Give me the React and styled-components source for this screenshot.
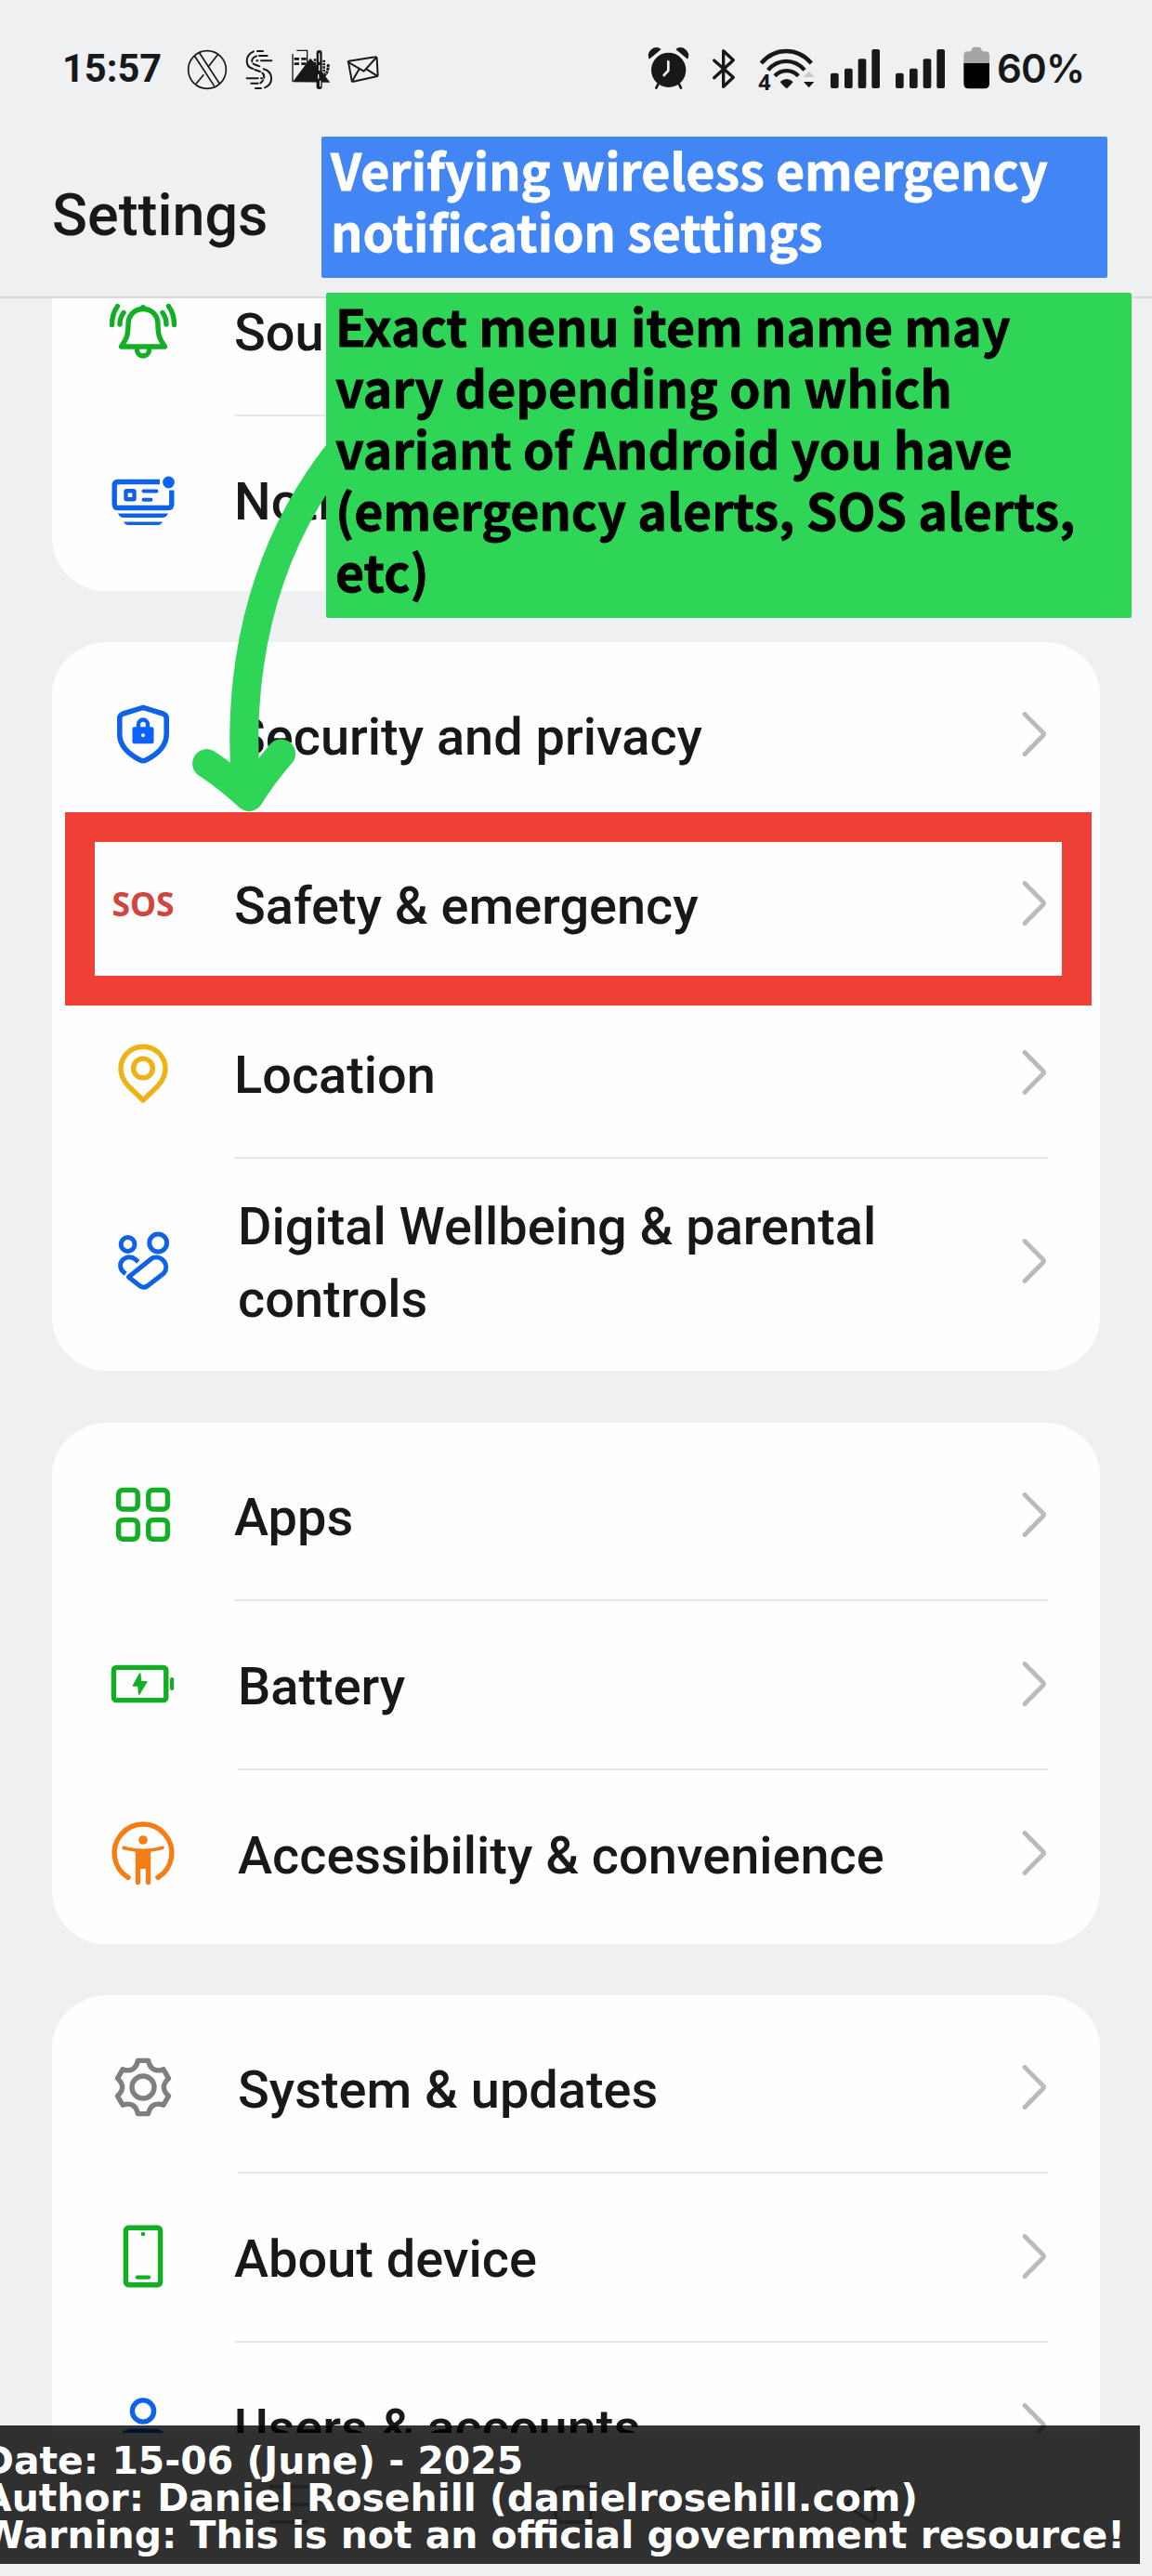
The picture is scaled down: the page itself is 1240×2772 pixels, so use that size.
import React from "react";
import styled, { createGlobalStyle } from "styled-components";

const GlobalStyle = createGlobalStyle`
  body { margin: 0; background: #eff1f3; }
  * { box-sizing: border-box; }
`;

const colors = {
  page: "#eff0f2",
  ink: "#17181a",
  green: "#12af24",
  blue: "#0d62e6",
  amber: "#edb216",
  orange: "#f47e14",
  grey: "#7f7f7f",
  red: "#d2453c",
};

const Screen = styled.div`
  position: relative;
  width: 1240px;
  height: 2772px;
  overflow: hidden;
  display: flex;
  flex-direction: column;
  background: ${colors.page};
  color: ${colors.ink};
  font-family: Roboto, "Liberation Sans", sans-serif;
`;

/* ---------- status bar ---------- */

const StatusBar = styled.div`
  height: 148px;
  flex: none;
  display: flex;
  justify-content: space-between;
  align-items: center;
  padding: 0 73px 0 67px;
`;

const StatusGroup = styled.div`
  display: flex;
  align-items: center;
`;

const Clock = styled.div`
  width: 106px;
  font-size: 41.6px;
  line-height: 52px;
  font-weight: 700;
  white-space: nowrap;
`;

const Percent = styled.div`
  width: 94px;
  margin-left: 8px;
  font-family: Inter, Roboto, sans-serif;
  font-size: 42px;
  line-height: 52px;
  font-weight: 600;
  letter-spacing: -0.8px;
  white-space: nowrap;
`;

const StatusSvg = styled.svg`
  display: block;
  flex: none;
  width: ${(p) => p.$w / 3}px;
  height: 52px;
  margin-left: ${(p) => p.$gap || 0}px;
  overflow: visible;
`;

const StatusIcon = ({ w, gap, children }) => (
  <StatusSvg $w={w} $gap={gap} viewBox={`0 0 ${w} 156`} fill="none" stroke={colors.ink}>
    {children}
  </StatusSvg>
);

const CrossCircleIcon = () => (
  <StatusIcon w={126} gap={29}>
    <circle cx="63" cy="81" r="61" strokeWidth="5" />
    <path d="M22 36 L86 134 M38 27 L103 126" strokeWidth="5" />
    <path d="M99 30 L67 71 M52 97 L27 127" strokeWidth="5" />
  </StatusIcon>
);

const DashedSwirlIcon = () => (
  <StatusIcon w={84} gap={21}>
    <g strokeWidth="6" strokeLinecap="round">
      <path d="M24 22 C-6 35 -4 72 22 78" />
      <path d="M33 37 C13 45 15 62 32 66 L43 70" strokeDasharray="24 8" />
      <path d="M36 21 H54 M42 36 H68 M34 52 H37 M48 52 H82" />
      <path d="M28 81 L45 87 C62 94 62 112 46 124" strokeDasharray="18 8" />
      <path d="M56 79 C90 88 88 128 60 139" />
      <path d="M2 109 H38 M48 109 H51 M16 125 H38 M30 141 H48" />
    </g>
  </StatusIcon>
);

const SceneIcon = () => (
  <StatusIcon w={125} gap={21}>
    <path d="M3 30 V120 M16 19 H50 V60" strokeWidth="4" />
    <path d="M8 46 H24 M31 46 H47 M8 62 H24 M31 62 H47" strokeWidth="8" />
    <path d="M3 121 L60 44 L84 70 L124 122 Z" fill={colors.ink} stroke="none" />
    <path d="M70 60 C72 96 80 102 90 104 C108 104 118 92 118 62" strokeWidth="9" strokeDasharray="9 2" />
    <path d="M104 50 V92 M75 46 V88" strokeWidth="8" strokeDasharray="7 3" />
    <rect x="82" y="20" width="14" height="122" rx="6" fill={colors.ink} strokeWidth="4" />
    <path d="M89 28 V56 M89 66 V84 M86 96 V110 M92 116 V136" stroke={colors.page} strokeWidth="4" />
  </StatusIcon>
);

const EnvelopeIcon = () => (
  <StatusIcon w={104} gap={17}>
    <g strokeWidth="6" strokeLinejoin="round" strokeLinecap="round">
      <path d="M6 56 Q3 55 8 53 L92 40 Q97 39 98 44 L101 99 Q101 102 97 103 L22 119 Q18 120 17 116 Z" />
      <path d="M6 57 L56 86 L96 42 M19 117 L41 79 M99 101 L64 79" />
    </g>
  </StatusIcon>
);

const AlarmIcon = () => (
  <StatusIcon w={129}>
    <g fill={colors.ink} stroke="none">
      <circle cx="65" cy="82" r="56" />
      <path d="M3 44 C-4 22 18 4 38 15 Z" strokeWidth="4" strokeLinejoin="round" stroke={colors.ink} />
      <path d="M126 44 C133 22 111 4 91 15 Z" strokeWidth="4" strokeLinejoin="round" stroke={colors.ink} />
    </g>
    <path d="M32 126 L25 140 M98 126 L105 140" strokeWidth="8" strokeLinecap="round" />
    <path d="M64 55 V84 L50 99" stroke={colors.page} strokeWidth="8" strokeLinecap="round" />
  </StatusIcon>
);

const BluetoothIcon = () => (
  <StatusIcon w={73} gap={26}>
    <path
      d="M5 51 L67 106 L35 136 V20 L67 50 L5 107"
      strokeWidth="10"
      strokeLinecap="round"
      strokeLinejoin="round"
    />
  </StatusIcon>
);

const WifiIcon = () => (
  <StatusIcon w={181} gap={26}>
    <g strokeWidth="13">
      <path d="M7 60 C52 8 124 8 169 60" />
      <path d="M29 82 C62 44 114 44 147 82" />
      <path d="M51 101 C72 79 106 79 127 101" />
    </g>
    <path d="M68 120 Q89 102 110 120 Q98 136 89 142 Q80 136 68 120 Z" fill={colors.ink} stroke="none" />
    <path d="M142 105 L161 87 L180 105 Z" fill="#c9cacb" stroke="none" />
    <path d="M144 120 H178 L161 139 Z" fill={colors.ink} stroke="none" />
    <text
      x="-2"
      y="147"
      fontFamily="Open Sans, sans-serif"
      fontWeight="700"
      fontSize="70"
      fill={colors.ink}
      stroke="none"
    >
      4
    </text>
  </StatusIcon>
);

const SignalIcon = ({ gap }) => (
  <StatusIcon w={159} gap={gap}>
    <g fill={colors.ink} stroke="none">
      <rect x="0" y="92" width="26" height="49" rx="6" />
      <rect x="45" y="77" width="26" height="64" rx="6" />
      <rect x="89" y="46" width="26" height="95" rx="6" />
      <rect x="133" y="15" width="26" height="126" rx="6" />
    </g>
  </StatusIcon>
);

const BatteryLevelIcon = () => (
  <StatusIcon w={85} gap={20}>
    <path d="M1 60 V34 Q1 22 14 22 H24 Q28 8 34 8 H51 Q57 8 61 22 H71 Q84 22 84 34 V60 Z" fill="#a5a5a6" stroke="none" />
    <path d="M1 60 H84 V126 Q84 142 68 142 H17 Q1 142 1 126 Z" fill="#000" stroke="none" />
  </StatusIcon>
);

/* ---------- header ---------- */

const Header = styled.header`
  height: 173px;
  flex: none;
  padding: 48px 0 0 56px;
  border-bottom: 2px solid #d9dadb;
`;

const Title = styled.h1`
  margin: 0;
  font-size: 62.8px;
  line-height: 72px;
  font-weight: 500;
`;

/* ---------- settings list ---------- */

const List = styled.main`
  height: 2297px;
  flex: none;
  overflow: hidden;
  padding: 0 56px;
`;

const Stack = styled.div`
  margin-top: -65px;
  display: flex;
  flex-direction: column;
`;

const Card = styled.section`
  flex: none;
  padding: 8px 56px ${(p) => p.$bottom}px 62px;
  margin-bottom: ${(p) => p.$gap}px;
  border-radius: 58px;
  background: #fefefe;
`;

const Row = styled.div`
  display: flex;
  align-items: stretch;
  height: ${(p) => (p.$tall ? 223 : 182)}px;
`;

const IconSlot = styled.div`
  flex: none;
  display: flex;
  align-items: center;
  width: 72px;
`;

const RowBody = styled.div`
  flex: 1;
  display: flex;
  align-items: center;
  justify-content: space-between;
  margin-left: ${(p) => (p.$indent ? 66 : 62)}px;
  margin-bottom: -2px;
  border-bottom: ${(p) => (p.$divider ? "2px solid #e6e7e8" : "2px solid transparent")};
`;

const Label = styled.div`
  padding-top: 5px;
  max-width: 740px;
  font-size: 55.9px;
  line-height: 78px;
  font-weight: 500;
`;

const RowSvg = styled.svg`
  display: block;
  width: 72px;
  height: 72px;
  overflow: visible;
`;

const SosMark = styled.span`
  width: 72px;
  text-align: center;
  font-family: "Noto Sans", sans-serif;
  font-size: 35.5px;
  line-height: 40px;
  font-weight: 700;
  color: ${colors.red};
`;

const ChevronSvg = styled.svg`
  display: block;
  flex: none;
  width: 28px;
  height: 52px;
`;

const Chevron = () => (
  <ChevronSvg viewBox="0 0 28 52" fill="none" stroke="#bababa" strokeWidth="4.8" strokeLinecap="round" strokeLinejoin="round">
    <path d="M3 4.5 L22.6 24.3 Q24.3 26 22.6 27.7 L3 47.5" />
  </ChevronSvg>
);

const RowIcon = ({ color, width = 5.4, children }) => (
  <RowSvg viewBox="-36 -36 72 72" fill="none" stroke={color} strokeWidth={width} strokeLinejoin="round">
    {children}
  </RowSvg>
);

const BellIcon = () => (
  <RowIcon color={colors.green}>
    <path d="M-16 -6 C-16 -16 -9 -22.5 0 -22.5 S16 -16 16 -6 C16 8 19 11 23.5 18 H-23.5 C-19 11 -16 8 -16 -6 Z" />
    <path d="M-6.5 19 V21.5 A6.5 6.5 0 0 0 6.5 21.5 V19" />
    <path d="M0 -23.5 V-24" strokeLinecap="round" strokeWidth="5.8" />
    <path
      d="M-33.5 -5.5 C-33.5 -13 -31.5 -20 -27.5 -25.5 M-25 -6 C-25 -11 -23.5 -15 -21 -18.5 M33.5 -5.5 C33.5 -13 31.5 -20 27.5 -25.5 M25 -6 C25 -11 23.5 -15 21 -18.5"
      strokeLinecap="round"
    />
  </RowIcon>
);

const NotificationIcon = () => (
  <RowIcon color={colors.blue}>
    <path d="M18 -18.5 H-27 Q-30.8 -18.5 -30.8 -14.5 V5.5 Q-30.8 9.5 -27 9.5 H27 Q30.8 9.5 30.8 5.5 V-9.5" />
    <circle cx="27.5" cy="-18" r="6.4" fill="#0a66fb" stroke="none" />
    <rect x="-18.5" y="-8.8" width="9" height="9" rx="1" strokeWidth="4.4" />
    <path d="M0.5 -8.5 H14.5 M0.5 0.8 H8.5" strokeLinecap="round" strokeWidth="4" />
    <path d="M-27 15.5 H27 Q25 20 21 20 H-21 Q-25 20 -27 15.5 Z M-21 24.5 H21 Q19 28 16 28 H-16 Q-19 28 -21 24.5 Z" fill={colors.blue} stroke="none" />
  </RowIcon>
);

const ShieldIcon = () => (
  <RowIcon color={colors.blue} width={5.6}>
    <path d="M0 -28.6 L21.5 -22 Q25.2 -20.6 25.2 -17 V0 C25.2 14 13 23 2.5 28.2 Q0 29.2 -2.5 28.2 C-13 23 -25.2 14 -25.2 0 V-17 Q-25.2 -20.6 -21.5 -22 Z" />
    <rect x="-11.5" y="-7.8" width="23" height="18" rx="2" fill="#0a62fa" stroke="none" />
    <path d="M-5 -6 V-10.5 A5 5 0 0 1 5 -10.5 V-6" strokeWidth="4.4" stroke="#0a62fa" />
    <circle cx="0" cy="1.3" r="2" fill="#fff" stroke="none" />
  </RowIcon>
);

const PinIcon = () => (
  <RowIcon color={colors.amber}>
    <path d="M0 30 L-16 14.5 C-21 9 -24 3.5 -24 -4 A24 23.8 0 0 1 24 -4 C24 3.5 21 9 16 14.5 Z" />
    <circle cx="0" cy="-4.5" r="10.4" />
  </RowIcon>
);

const WellbeingIcon = () => (
  <RowIcon color={colors.blue} width={5}>
    <circle cx="-16.4" cy="-18" r="7.4" />
    <circle cx="16.2" cy="-19.5" r="9.4" />
    <path d="M-15.6 17.2 L9.5 -3 A10.6 10.6 0 0 1 22.5 13 L4.5 27 Q0.6 29.4 -3.3 26.8 Z" />
    <path d="M-5.2 0.8 L-8 -1.6 C-15 -7.5 -24.4 -2.5 -24.4 5 C-24.4 8.5 -22 11.5 -18.8 13.7" />
  </RowIcon>
);

const AppsIcon = () => (
  <RowIcon color={colors.green}>
    {[-26.4, 5.8].map((x) =>
      [-26.6, 5.6].map((y) => <rect key={`${x},${y}`} x={x} y={y} width="20.6" height="20.6" rx="4.6" />)
    )}
  </RowIcon>
);

const BatteryIcon = () => (
  <RowIcon color={colors.green}>
    <rect x="-31.6" y="-17.6" width="56.4" height="35.2" rx="3" />
    <rect x="29" y="-7" width="4.2" height="14" rx="2" fill={colors.green} stroke="none" />
    <path d="M-3.3 -11 L-10.5 2 H-5 L-4.3 11 L3.7 -2.2 H-2.6 Z" fill={colors.green} strokeWidth="1.6" />
  </RowIcon>
);

const AccessibilityIcon = () => (
  <RowIcon color={colors.orange}>
    <path d="M-16 26.4 A30.9 30.9 0 1 1 16 26.4" strokeLinecap="round" />
    <circle cx="0" cy="-14" r="4.8" fill={colors.orange} stroke="none" />
    <path
      d="M-20.5 -7.4 C-7 -3.6 7 -3.6 20.5 -7.4 Q23 -7.6 22.8 -5.4 Q22.6 -3.8 20.5 -3.4 L8.2 -1.2 V32 Q8 34.2 5.6 34.2 Q3.2 34.2 2.9 32 V17 H-2.9 V32 Q-3.2 34.2 -5.6 34.2 Q-8 34.2 -8.2 32 V-1.2 L-20.5 -3.4 Q-22.6 -3.8 -22.8 -5.4 Q-23 -7.6 -20.5 -7.4 Z"
      fill={colors.orange}
      stroke="none"
    />
  </RowIcon>
);

const rotate = ([x, y], deg) => {
  const a = (deg * Math.PI) / 180;
  const rx = x * Math.cos(a) - y * Math.sin(a);
  const ry = x * Math.sin(a) + y * Math.cos(a);
  return `${rx.toFixed(2)} ${ry.toFixed(2)}`;
};

const gearPath = [0, 60, 120, 180, 240, 300]
  .map((deg, i) => {
    const p = (x, y) => rotate([x, y], deg);
    const next = rotate([-5.6, -28.6], deg + 60);
    return `${i ? "L" : "M"}${p(-5.6, -28.6)} L${p(5.6, -28.6)} C${p(7.5, -19.5)} ${p(13.1, -16.2)} ${next}`;
  })
  .join(" ");

const GearIcon = () => (
  <RowIcon color={colors.grey}>
    <path d={`${gearPath} Z`} />
    <circle cx="0" cy="0" r="12" />
  </RowIcon>
);

const PhoneIcon = () => (
  <RowIcon color={colors.green}>
    <rect x="-18.6" y="-30.8" width="37.2" height="61.6" rx="3" />
    <circle cx="0" cy="-24" r="2.3" fill={colors.green} stroke="none" />
    <path d="M-6.2 22.6 H6.2" strokeLinecap="round" strokeWidth="4.2" />
  </RowIcon>
);

const UserIcon = () => (
  <RowIcon color={colors.blue}>
    <circle cx="0" cy="-15.5" r="11.6" />
    <path d="M-24 26 C-24 12 -21 6.2 -12 6.2 H12 C21 6.2 24 12 24 26 Z" />
  </RowIcon>
);

/* ---------- navigation bar ---------- */

const NavBar = styled.nav`
  flex: 1;
  display: flex;
  justify-content: space-between;
  align-items: flex-start;
  padding: 54px 294px 0 288px;
`;

const NavSvg = styled.svg`
  display: block;
  width: 46px;
  height: 46px;
`;

const NavIcon = ({ d }) => (
  <NavSvg viewBox="0 0 46 46" fill="none" stroke="#a2a3a4" strokeWidth="3.6" strokeLinejoin="round">
    <path d={d} />
  </NavSvg>
);

/* ---------- annotations laid over the screen ---------- */

const Note = styled.div`
  position: absolute;
  left: ${(p) => p.$x}px;
  top: ${(p) => p.$y}px;
  width: ${(p) => p.$w}px;
  height: ${(p) => p.$h}px;
  padding: 1.6px 0 0 10px;
  border-radius: 2px;
  background: ${(p) => p.$bg};
  color: ${(p) => p.$fg};
  font-family: "Noto Sans CJK JP", "Noto Sans", sans-serif;
  font-size: 53.7px;
  line-height: 66.1px;
  font-weight: 700;
  -webkit-text-stroke: 0.8px ${(p) => p.$fg};
  white-space: nowrap;
`;

const Highlight = styled.div`
  position: absolute;
  left: 70px;
  top: 874px;
  width: 1105px;
  height: 208px;
  border: 32px solid #ef4037;
`;

const ArrowSvg = styled.svg`
  position: absolute;
  left: 200px;
  top: 480px;
  width: 170px;
  height: 400px;
`;

const Caption = styled.footer`
  position: absolute;
  left: 0;
  top: 2610px;
  width: 1227px;
  height: 149px;
  overflow: hidden;
  padding-top: 18px;
  background: rgba(0, 0, 0, 0.8);
  color: #fff;
  font-family: "DejaVu Sans", sans-serif;
  font-size: 40.9px;
  line-height: 40.2px;
  font-weight: 700;
`;

const CaptionLine = styled.div`
  margin-left: -19px;
  white-space: nowrap;
`;

const groups = [
  {
    gap: 55,
    bottom: 8,
    rows: [
      { icon: <BellIcon />, label: "Sound & vibration" },
      { icon: <NotificationIcon />, label: "Notifications & status bar" },
    ],
  },
  {
    gap: 56,
    bottom: 7,
    rows: [
      { icon: <ShieldIcon />, label: "Security and privacy" },
      { icon: <SosMark>SOS</SosMark>, label: "Safety & emergency" },
      { icon: <PinIcon />, label: "Location" },
      { icon: <WellbeingIcon />, label: "Digital Wellbeing & parental controls", tall: true, indent: true },
    ],
  },
  {
    gap: 55,
    bottom: 7,
    rows: [
      { icon: <AppsIcon />, label: "Apps" },
      { icon: <BatteryIcon />, label: "Battery", indent: true },
      { icon: <AccessibilityIcon />, label: "Accessibility & convenience", indent: true },
    ],
  },
  {
    gap: 0,
    bottom: 8,
    rows: [
      { icon: <GearIcon />, label: "System & updates", indent: true },
      { icon: <PhoneIcon />, label: "About device" },
      { icon: <UserIcon />, label: "Users & accounts" },
    ],
  },
];

export default function App() {
  return (
    <Screen>
      <GlobalStyle />
      <StatusBar>
        <StatusGroup>
          <Clock>15:57</Clock>
          <CrossCircleIcon />
          <DashedSwirlIcon />
          <SceneIcon />
          <EnvelopeIcon />
        </StatusGroup>
        <StatusGroup>
          <AlarmIcon />
          <BluetoothIcon />
          <WifiIcon />
          <SignalIcon gap={16} />
          <SignalIcon gap={17} />
          <BatteryLevelIcon />
          <Percent>60%</Percent>
        </StatusGroup>
      </StatusBar>

      <Header>
        <Title>Settings</Title>
      </Header>

      <List>
        <Stack>
          {groups.map((group, g) => (
            <Card key={g} $gap={group.gap} $bottom={group.bottom}>
              {group.rows.map((row, r) => (
                <Row key={row.label} $tall={row.tall}>
                  <IconSlot>{row.icon}</IconSlot>
                  <RowBody $indent={row.indent} $divider={r < group.rows.length - 1}>
                    <Label>{row.label}</Label>
                    <Chevron />
                  </RowBody>
                </Row>
              ))}
            </Card>
          ))}
        </Stack>
      </List>

      <NavBar>
        <NavIcon d="M2 4 H44 M2 23 H44 M2 42 H44" />
        <NavIcon d="M12 4 H34 Q42 4 42 12 V34 Q42 42 34 42 H12 Q4 42 4 34 V12 Q4 4 12 4 Z" />
        <NavIcon d="M38 6 Q41 4 42 8 V38 Q41 43 37 41 L13 26 Q10 23 13 20 Z" />
      </NavBar>

      <Highlight />
      <ArrowSvg
        viewBox="200 480 170 400"
        fill="none"
        stroke="#2fd556"
        strokeWidth="31"
        strokeLinecap="round"
        strokeLinejoin="round"
      >
        <path d="M362 490 C277 600 255 730 265 850" />
        <path d="M222.6 821.6 Q246 837 268 857.5 Q282 835 302.5 811" />
      </ArrowSvg>
      <Note $x={346} $y={147} $w={846} $h={152} $bg="#4286f5" $fg="#fff">
        Verifying wireless emergency
        <br />
        notification settings
      </Note>
      <Note $x={351} $y={315} $w={867} $h={350} $bg="#2fd556" $fg="#000">
        Exact menu item name may
        <br />
        vary depending on which
        <br />
        variant of Android you have
        <br />
        (emergency alerts, SOS alerts,
        <br />
        etc)
      </Note>
      <Caption>
        <CaptionLine>Date: 15-06 (June) - 2025</CaptionLine>
        <CaptionLine>Author: Daniel Rosehill (danielrosehill.com)</CaptionLine>
        <CaptionLine>Warning: This is not an official government resource!</CaptionLine>
      </Caption>
    </Screen>
  );
}
